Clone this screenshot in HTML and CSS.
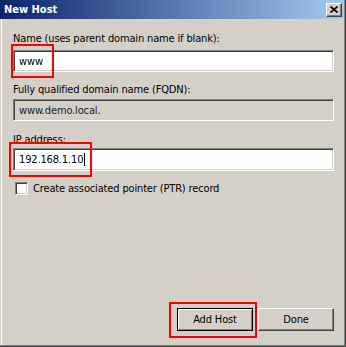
FILE: index.html
```html
<!DOCTYPE html>
<html lang="en">
<head>
  <meta charset="UTF-8">
  <title>New Host</title>
  <link rel="stylesheet" href="styles.css">
</head>
<body>

<div class="window">
  <div class="titlebar">
    <span class="title">New Host</span>
    <button class="close" type="button" aria-label="Close">
      <svg width="8" height="7" viewBox="0 0 8 7">
        <path d="M0.5 0.5 L7.5 6.5 M7.5 0.5 L0.5 6.5" stroke="#000" stroke-width="1.7" fill="none"/>
      </svg>
    </button>
  </div>

  <div class="body">
    <div class="label label-name">Name (uses parent domain name if blank):</div>
    <div class="edit">www</div>

    <div class="label label-fqdn">Fully qualified domain name (FQDN):</div>
    <div class="edit edit-disabled">www.demo.local.</div>

    <div class="label label-ip">IP address:</div>
    <div class="edit edit-ip">192.168.1.10<span class="caret"></span></div>

    <div class="check-row">
      <span class="checkbox"></span>
      <span>Create associated pointer (PTR) record</span>
    </div>

    <div class="buttons">
      <button class="btn btn-default" type="button">Add Host</button>
      <button class="btn" type="button">Done</button>
    </div>
  </div>

  <!-- annotation boxes -->
  <div class="mark mark-name"></div>
  <div class="mark mark-ip"></div>
  <div class="mark mark-add"></div>
</div>

</body>
</html>
```

FILE: styles.css
```css
body {
  margin: 0;
  background: #d4d0c8;
  font-family: "DejaVu Sans Condensed", "Liberation Sans", sans-serif;
  font-size: 11px;
  letter-spacing: -0.15px;
  color: #000;
}

.window {
  position: relative;
  width: 346px;
  height: 347px;
  box-sizing: border-box;
  display: flex;
  flex-direction: column;
  padding: 0 1px 1px 0;
  border-right: 1px solid #404040;
  border-bottom: 1px solid #404040;
  box-shadow: inset -1px -1px #808080;
  background: #d4d0c8;
}

.titlebar {
  height: 19px;
  display: flex;
  align-items: center;
  justify-content: space-between;
  padding: 0 2px 0 4px;
  background: linear-gradient(to right, #0a246a, #a6caf0);
}

.title {
  color: #fff;
  font-weight: bold;
  letter-spacing: 0;
  line-height: 19px;
}

.close {
  width: 16px;
  height: 14px;
  padding: 0;
  display: flex;
  align-items: center;
  justify-content: center;
  background: #d4d0c8;
  border: 1px solid;
  border-color: #fff #404040 #404040 #fff;
  box-shadow: inset -1px -1px #808080;
}

.body {
  flex: 1;
  display: flex;
  flex-direction: column;
  padding: 13px 10px 14px 12px;
  border-left: 1px solid #d4d0c8;
  box-shadow: inset 1px 0 #fff;
}

.label {
  line-height: 13px;
  height: 13px;
}

.label-name { margin-bottom: 5px; }
.label-fqdn { margin-top: 11px; margin-bottom: 3px; }
.label-ip { margin-top: 12px; margin-bottom: 2px; }

.edit {
  height: 22px;
  box-sizing: border-box;
  display: flex;
  align-items: center;
  padding-left: 5px;
  background: #fff;
  border: 1px solid;
  border-color: #808080 #fff #fff #808080;
  box-shadow: inset 1px 1px #404040, inset -1px -1px #d4d0c8;
}

.edit-disabled {
  background: #d4d0c8;
  color: #222;
}

.edit-ip {
  height: 23px;
}

.caret {
  display: inline-block;
  width: 1px;
  height: 13px;
  margin-left: 1px;
  background: #000;
}

.check-row {
  display: flex;
  align-items: center;
  gap: 5px;
  margin-top: 11px;
  padding-left: 2px;
  line-height: 13px;
}

.checkbox {
  width: 13px;
  height: 13px;
  box-sizing: border-box;
  background: #fff;
  border: 1px solid;
  border-color: #808080 #fff #fff #808080;
  box-shadow: inset 1px 1px #404040, inset -1px -1px #d4d0c8;
}

.buttons {
  margin-top: auto;
  display: flex;
  justify-content: flex-end;
  gap: 5px;
}

.btn {
  width: 76px;
  height: 23px;
  padding: 0;
  font-family: inherit;
  font-size: 11px;
  letter-spacing: inherit;
  color: #000;
  background: #d4d0c8;
  border: 1px solid;
  border-color: #fff #404040 #404040 #fff;
  box-shadow: inset -1px -1px #808080;
}

.btn-default {
  border-color: #000;
  box-shadow: inset 1px 1px #fff, inset -1px -1px #808080;
}

.mark {
  position: absolute;
  border: 2px solid #f00;
  box-sizing: border-box;
}

.mark-name { left: 11px; top: 44px; width: 43px; height: 34px; }
.mark-ip { left: 9px; top: 142px; width: 83px; height: 35px; }
.mark-add { left: 169px; top: 302px; width: 88px; height: 36px; }
```
